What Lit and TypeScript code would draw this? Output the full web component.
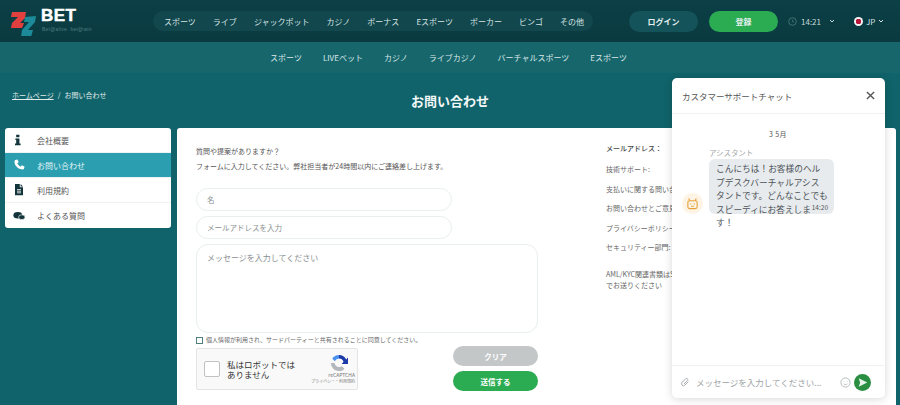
import { LitElement, html, css, svg } from "lit";
import { customElement } from "lit/decorators.js";

const topNav = ["スポーツ", "ライブ", "ジャックポット", "カジノ", "ボーナス", "Eスポーツ", "ポーカー", "ビンゴ", "その他"];
const subNav = ["スポーツ", "LIVEベット", "カジノ", "ライブカジノ", "バーチャルスポーツ", "Eスポーツ"];
const contacts = ["技術サポート:", "支払いに関する問い合わせ:", "お問い合わせとご意見:", "プライバシーポリシー:", "セキュリティー部門:"];

const iconInfo = svg`<path d="M4 1h4v3H4zM3 5.5h5V12h1.5v2h-7v-2H4V7.5H3z" fill="#12343a"/>`;
const iconPhone = svg`<path d="M3 1.2 5.6.6l1.5 3.4-1.7 1.4a9 9 0 0 0 4.2 4.2l1.4-1.7 3.4 1.5-.6 2.6c-.1.6-.6 1-1.2 1C6.400 13 1 7.600 2 2.400c.1-.6.500-1.100 1-1.200z" fill="#fff"/>`;
const iconDoc = svg`<path d="M2.500 0h6v4h4v10h-10z" fill="#12343a"/><path d="M9.500 0l3 3h-3z" fill="#12343a"/><path d="M5 7h5M5 9h5M5 11h5" stroke="#fff" stroke-width="1"/>`;
const iconChat = svg`<ellipse cx="6" cy="6.500" rx="5.500" ry="4" fill="#12343a"/><ellipse cx="11" cy="9" rx="4" ry="3" fill="#12343a" stroke="#fff" stroke-width=".8"/>`;

const sideItems = [
  { label: "会社概要", icon: iconInfo, active: false },
  { label: "お問い合わせ", icon: iconPhone, active: true },
  { label: "利用規約", icon: iconDoc, active: false },
  { label: "よくある質問", icon: iconChat, active: false },
];

@customElement("app-root")
export class AppRoot extends LitElement {
  static styles = css`
    :host {
      display: block;
      width: 900px;
      height: 405px;
      overflow: hidden;
      position: relative;
      background: #10636a;
      font-family: "Noto Sans CJK JP", "Noto Sans", sans-serif;
      color: #444;
    }
    .header {
      height: 42px;
      box-sizing: border-box;
      background: linear-gradient(#0b4046, #0a3a40);
      display: flex;
      align-items: center;
      padding-left: 10px;
    }
    .logo { display: flex; flex-direction: column; width: 143px; flex: none; }
    .logo-top { display: flex; align-items: center; gap: 1px; height: 32px; }
    .logo-word {
      font: 900 17px/17px "Liberation Sans", sans-serif;
      color: #fff;
      letter-spacing: .4px;
      margin-top: -12px;
      -webkit-text-stroke: .5px #fff;
    }
    .logo-tag {
      font: 5px/6px "Liberation Sans", sans-serif;
      color: #4f7c80;
      position: absolute;
      left: 42px;
      top: 26px;
      letter-spacing: .25px;
    }
    .topnav {
      width: 440px;
      height: 20px;
      box-sizing: border-box;
      background: #12474d;
      border-radius: 10px;
      display: flex;
      align-items: center;
      justify-content: space-between;
      padding: 0 9px 0 11px;
      font-size: 8px;
      color: #d7e5e6;
      flex: none;
    }
    .btn-login, .btn-reg {
      width: 69px;
      height: 21px;
      border-radius: 11px;
      display: flex;
      align-items: center;
      justify-content: center;
      font-size: 8px;
      font-weight: 700;
      color: #e6f0f0;
      flex: none;
    }
    .btn-login { background: #15535a; margin-left: 36px; }
    .btn-reg { background: #2bac53; margin-left: 11px; }
    .clock {
      display: flex;
      align-items: center;
      font-size: 8px;
      color: #c9dadb;
      margin-left: 10px;
      gap: 4px;
    }
    .lang {
      display: flex;
      align-items: center;
      font-size: 8px;
      color: #d7e5e6;
      margin-left: 19px;
      gap: 3px;
    }
    .flag {
      width: 9px; height: 9px; border-radius: 50%;
      background: radial-gradient(circle, #b5173a 0 2.600px, #f5f5f5 3px);
    }
    .subnav {
      height: 31px;
      background: #17666c;
      display: flex;
      align-items: center;
      justify-content: center;
      gap: 21px;
      padding-right: 3px;
      font-size: 8px;
      color: #dbe9ea;
    }
    .hero {
      height: 55px;
      position: relative;
      display: flex;
      align-items: center;
      justify-content: center;
    }
    .crumbs {
      position: absolute;
      left: 12px;
      top: 17px;
      font-size: 7px;
      line-height: 10px;
      color: #e1ecec;
    }
    .crumbs u { margin-right: 4px; }
    .crumbs span { margin-left: 4px; }
    h1 {
      margin: 0;
      font-size: 13px;
      font-weight: 700;
      color: #f2f7f7;
      position: relative;
      top: 0;
    }
    .main {
      display: flex;
      gap: 6px;
      padding: 0 4px 0 5px;
      align-items: flex-start;
    }
    .side {
      width: 166px;
      height: 100px;
      background: #fff;
      border-radius: 3px;
      overflow: hidden;
      flex: none;
    }
    .side-item {
      height: 25px;
      display: flex;
      align-items: center;
      font-size: 8px;
      color: #555;
      box-sizing: border-box;
      border-bottom: 1px solid #eef2f2;
    }
    .side-item:last-child { border-bottom: 0; }
    .side-item.active { background: #2b9fb0; color: #e8f6f8; }
    .side-item svg { width: 12px; height: 12px; margin: 0 12px 0 8px; flex: none; }
    .card {
      flex: 1;
      height: 290px;
      background: #fff;
      border-radius: 3px 3px 0 0;
      display: flex;
      padding: 16px 0 0 19px;
      box-sizing: border-box;
    }
    .form { width: 342px; flex: none; }
    .form p { margin: 0; font-size: 7px; line-height: 15px; color: #555; }
    .field {
      width: 256px;
      height: 23px;
      box-sizing: border-box;
      border: 1px solid #e9eeee;
      border-radius: 12px;
      padding-left: 10px;
      display: flex;
      align-items: center;
      font-size: 7.500px;
      color: #8a8f91;
      margin-bottom: 5px;
    }
    .field.first { margin-top: 14px; }
    .area {
      width: 342px;
      height: 89px;
      box-sizing: border-box;
      border: 1px solid #e9eeee;
      border-radius: 12px;
      padding: 7px 10px;
      font-size: 8px;
      line-height: 12px;
      color: #8a8f91;
    }
    .consent {
      display: flex;
      align-items: center;
      font-size: 6px;
      line-height: 10px;
      color: #666;
      gap: 3px;
      margin-top: 2px;
    }
    .box { width: 5px; height: 5px; border: 1px solid #4f7f7a; }
    .bottom {
      display: flex;
      justify-content: space-between;
      margin-top: 3px;
    }
    .captcha {
      width: 162px;
      height: 42px;
      box-sizing: border-box;
      background: #f9f9f9;
      border: 1px solid #e4e4e4;
      border-radius: 2px;
      display: flex;
      align-items: center;
      padding-left: 7px;
      color: #333;
    }
    .captcha-box { width: 14px; height: 14px; background: #fff; border: 1px solid #c1c1c1; border-radius: 2px; flex: none; }
    .captcha-text { width: 70px; font-size: 8.500px; line-height: 10px; margin-left: 7px; }
    .captcha-brand {
      width: 50px;
      margin-left: 8px;
      display: flex;
      flex-direction: column;
      align-items: flex-end;
      font-size: 5px;
      line-height: 6px;
      color: #777;
    }
    .captcha-brand svg { width: 18px; height: 18px; margin-right: 7px; }
    .captcha-brand small { font-size: 4px; line-height: 6px; white-space: nowrap; }
    .actions { display: flex; flex-direction: column; gap: 5px; margin-top: -2px; }
    .action {
      width: 85px;
      height: 20px;
      border-radius: 10px;
      display: flex;
      align-items: center;
      justify-content: center;
      font-size: 7.500px;
      font-weight: 700;
      color: #fff;
    }
    .clear { background: #c4c7c8; }
    .send { background: #2bac53; }
    .info {
      margin-left: 68px;
      font-size: 7px;
      color: #666;
      line-height: 12px;
      white-space: nowrap;
    }
    .info b { display: block; font-weight: 500; color: #444; height: 19px; line-height: 9px; padding-top: 0; }
    .info div { height: 19.500px; line-height: 12px; }
    .info .aml { margin-top: 8px; line-height: 11px; height: auto; }
    .chat {
      position: absolute;
      left: 672px;
      top: 78px;
      width: 213px;
      height: 320px;
      background: #fff;
      border-radius: 5px;
      box-shadow: 0 1px 8px rgba(0, 0, 0, .16);
      display: flex;
      flex-direction: column;
      color: #555;
    }
    .chat-head {
      height: 36px;
      flex: none;
      box-sizing: border-box;
      border-bottom: 1px solid #f0f2f2;
      display: flex;
      align-items: center;
      justify-content: space-between;
      padding: 0 10px;
      font-size: 8.500px;
      color: #555;
    }
    .chat-head svg { width: 9px; height: 9px; display: block; margin-right: 0; }
    .chat-body { flex: 1; padding-top: 15px; display: flex; flex-direction: column; }
    .date { text-align: center; font-size: 7px; line-height: 10px; color: #555; padding-right: 1px; letter-spacing: .4px; }
    .msg { display: flex; align-items: flex-end; margin-top: 9px; padding-left: 11px; gap: 6px; }
    .avatar {
      width: 21px; height: 21px; border-radius: 50%;
      background: #fdf4e6; display: flex; align-items: center; justify-content: center;
      flex: none; margin-left: -1px; margin-right: 0; margin-bottom: 0;
    }
    .avatar svg { width: 13px; height: 13px; }
    .author { font-size: 7.500px; line-height: 9px; color: #a5a9ab; margin-bottom: 2px; letter-spacing: -.1px; }
    .bubble {
      width: 125px;
      height: 55px;
      box-sizing: border-box;
      background: #e7ebee;
      border-radius: 6px;
      padding: 3px 6px 0 7px;
      font-size: 8.700px;
      line-height: 13.500px;
      color: #4e5358;
      position: relative;
    }
    .time { position: absolute; right: 6px; bottom: 3px; font-size: 6.500px; line-height: 8px; color: #555; }
    .chat-input {
      height: 33px;
      flex: none;
      box-sizing: border-box;
      border-top: 1px solid #f0f2f2;
      display: flex;
      align-items: center;
      padding: 0 8px 0 8px;
      font-size: 8.500px;
      color: #9da2a4;
    }
    .chat-input .ph { margin-left: 6px; width: 130px; letter-spacing: 0; white-space: nowrap; overflow: hidden; }
    .chat-input .clip { width: 10px; height: 10px; flex: none; }
    .chat-input .smile { width: 11px; height: 11px; margin-left: 14px; flex: none; }
    .send-round { width: 17px; height: 17px; margin-left: 3px; flex: none; }
  `;

  render() {
    return html`
      <div class="header">
        <div class="logo">
          <div class="logo-top">
            <svg width="30" height="30" viewBox="0 0 30 30">
              <path d="M2 6 L16 6 L15 12 L10 17 L14 17 L12 22 L1 22 L2 17 L8 11 L1 11 Z" fill="#e2403f"/>
              <path d="M15 11 L26 10 L25 16 L18 24 L23 24 L21 31 L11 31 L12 24 L19 16 L14 16 Z" fill="#1d8a99"/>
            </svg>
            <span class="logo-word">BET</span>
          </div>
          <span class="logo-tag">Bet@alive. bet@win</span>
        </div>
        <nav class="topnav">${topNav.map((t) => html`<span>${t}</span>`)}</nav>
        <div class="btn-login">ログイン</div>
        <div class="btn-reg">登録</div>
        <div class="clock">
          <svg width="9" height="9" viewBox="0 0 9 9"><circle cx="4.500" cy="4.500" r="3.800" fill="none" stroke="#4f7c80" stroke-width=".8"/><path d="M4.500 2.500v2.200h1.500" stroke="#4f7c80" stroke-width=".7" fill="none"/></svg>
          <span>14:21</span>
          <svg width="6" height="4" viewBox="0 0 6 4" style="margin-left:4px"><path d="M1 1l2 2 2-2" stroke="#c9dadb" fill="none"/></svg>
        </div>
        <div class="lang">
          <span class="flag"></span><span>JP</span>
          <svg width="6" height="4" viewBox="0 0 6 4"><path d="M1 1l2 2 2-2" stroke="#d7e5e6" fill="none"/></svg>
        </div>
      </div>
      <div class="subnav">${subNav.map((t) => html`<span>${t}</span>`)}</div>
      <div class="hero">
        <div class="crumbs"><u>ホームページ</u>/<span>お問い合わせ</span></div>
        <h1>お問い合わせ</h1>
      </div>
      <div class="main">
        <div class="side">
          ${sideItems.map(
            (s) => html`<div class="side-item ${s.active ? "active" : ""}">
              <svg viewBox="0 0 15 15">${s.icon}</svg><span>${s.label}</span>
            </div>`
          )}
        </div>
        <div class="card">
          <div class="form">
            <p>質問や提案がありますか？</p>
            <p>フォームに入力してください。弊社担当者が24時間以内にご連絡差し上げます。</p>
            <div class="field first">名</div>
            <div class="field">メールアドレスを入力</div>
            <div class="area">メッセージを入力してください</div>
            <div class="consent"><span class="box"></span><span>個人情報が利用され、サードパーティーと共有されることに同意してください。</span></div>
            <div class="bottom">
              <div class="captcha">
                <div class="captcha-box"></div>
                <div class="captcha-text">私はロボットではありません</div>
                <div class="captcha-brand">
                  <svg viewBox="0 0 20 20">
                    <path d="M10 1a9 9 0 0 1 8 5l2-2v7h-7l2-2.500A5.500 5.500 0 0 0 10 5z" fill="#1c3aa9"/>
                    <path d="M10 1a9 9 0 0 0-7.500 4L5.300 8A5.500 5.500 0 0 1 10 5z" fill="#4a90f0"/>
                    <path d="M1 10a9 9 0 0 0 9 9c3 0 5-1 6-3l-3-2.500a5 5 0 0 1-8-3.500H1z" fill="#b4b8bd"/>
                  </svg>
                  <span>reCAPTCHA</span>
                  <small>プライバシー・利用規約</small>
                </div>
              </div>
              <div class="actions">
                <div class="action clear">クリア</div>
                <div class="action send">送信する</div>
              </div>
            </div>
          </div>
          <div class="info">
            <b>メールアドレス：</b>
            ${contacts.map((c) => html`<div>${c}</div>`)}
            <div class="aml">AML/KYC関連書類はSupport@22bet.comまで<br />でお送りください</div>
          </div>
        </div>
      </div>
      <div class="chat">
        <div class="chat-head">
          <span>カスタマーサポートチャット</span>
          <svg viewBox="0 0 10 10"><path d="M1 1l8 8M9 1l-8 8" stroke="#555" stroke-width="1.500"/></svg>
        </div>
        <div class="chat-body">
          <div class="date">3 5月</div>
          <div class="msg">
            <div class="avatar">
              <svg viewBox="0 0 14 14" fill="none" stroke="#e9a13c" stroke-width="1.200">
                <rect x="2" y="4" width="10" height="8.500" rx="2"/>
                <path d="M4 4 3 1.500M10 4l1-2.500M5 7v1M9 7v1M5.500 10h3"/>
              </svg>
            </div>
            <div>
              <div class="author">アシスタント</div>
              <div class="bubble">こんにちは！お客様のヘルプデスクバーチャルアシスタントです。どんなことでもスピーディにお答えします！<span class="time">14:20</span></div>
            </div>
          </div>
        </div>
        <div class="chat-input">
          <svg class="clip" viewBox="0 0 12 12" fill="none" stroke="#a9adaf" stroke-width="1.200"><path d="M10 5.500 5.800 9.800a2.300 2.300 0 0 1-3.300-3.300l4.500-4.500a1.500 1.500 0 0 1 2.100 2.100L4.800 8.300"/></svg>
          <span class="ph">メッセージを入力してください...</span>
          <svg class="smile" viewBox="0 0 12 12" fill="none" stroke="#a9adaf" stroke-width=".9"><circle cx="6" cy="6" r="5"/><path d="M4 7.500c1 1 3 1 4 0M4.300 4.500v.5M7.700 4.500v.5"/></svg>
          <svg class="send-round" viewBox="0 0 18 18"><circle cx="9" cy="9" r="9" fill="#2a8f42"/><path d="M5 4.500 14 9l-9 4.500 1.500-4.500z" fill="#e9f5ec"/></svg>
        </div>
      </div>
    `;
  }
}
